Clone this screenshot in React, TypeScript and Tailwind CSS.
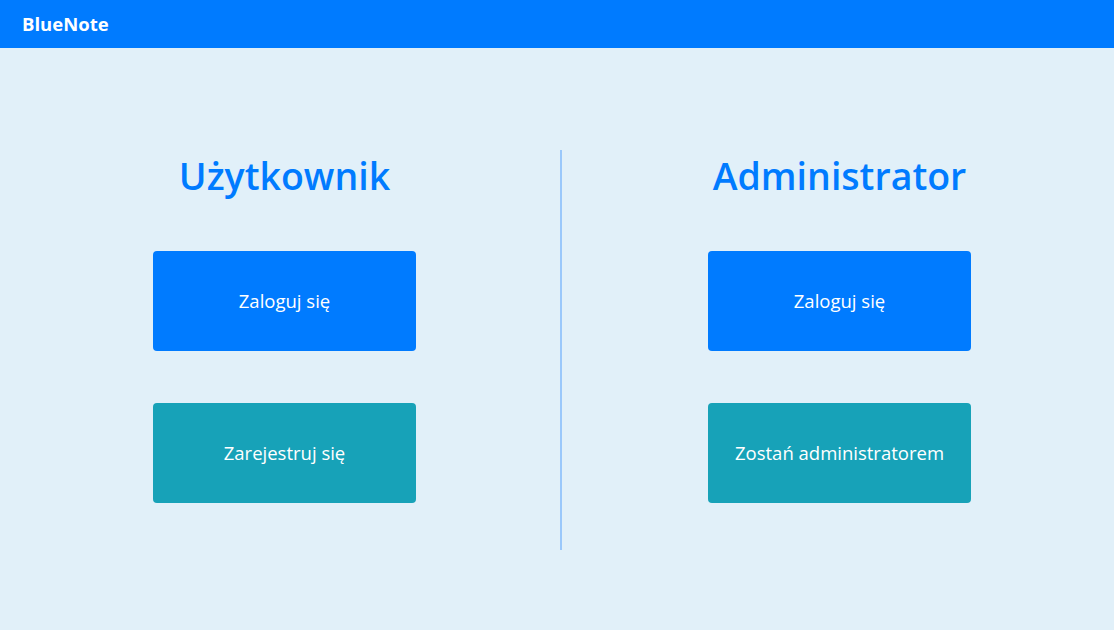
export default function App() {
  return (
    <div
      className="min-h-[630px] bg-[#e1f0f9]"
      style={{ fontFamily: '"Open Sans", "Noto Sans", sans-serif' }}
    >
      <nav className="h-12 bg-[#007bff] flex items-center px-[22px]">
        <span className="text-white font-bold text-[18.5px]">BlueNote</span>
      </nav>

      <div className="pt-[102px] pl-[7px] grid grid-cols-[553px_2px_555px]">
        <div className="pl-[2px]">
          <Column
            title="Użytkownik"
            primary="Zaloguj się"
            secondary="Zarejestruj się"
          />
        </div>
        <div className="h-[400px] bg-[#9ac8fb]" />
        <Column
          title="Administrator"
          primary="Zaloguj się"
          secondary="Zostań administratorem"
        />
      </div>
    </div>
  )
}

function Column({
  title,
  primary,
  secondary,
}: {
  title: string
  primary: string
  secondary: string
}) {
  return (
    <div className="flex flex-col items-center">
      <h1 className="text-[37.5px] leading-[52px] text-[#007bff] font-semibold">
        {title}
      </h1>
      <button className="mt-[49px] w-[263px] h-[100px] rounded bg-[#007bff] text-white text-[18.5px]">
        {primary}
      </button>
      <button className="mt-[52px] w-[263px] h-[100px] rounded bg-[#17a2b8] text-white text-[18.5px]">
        {secondary}
      </button>
    </div>
  )
}
